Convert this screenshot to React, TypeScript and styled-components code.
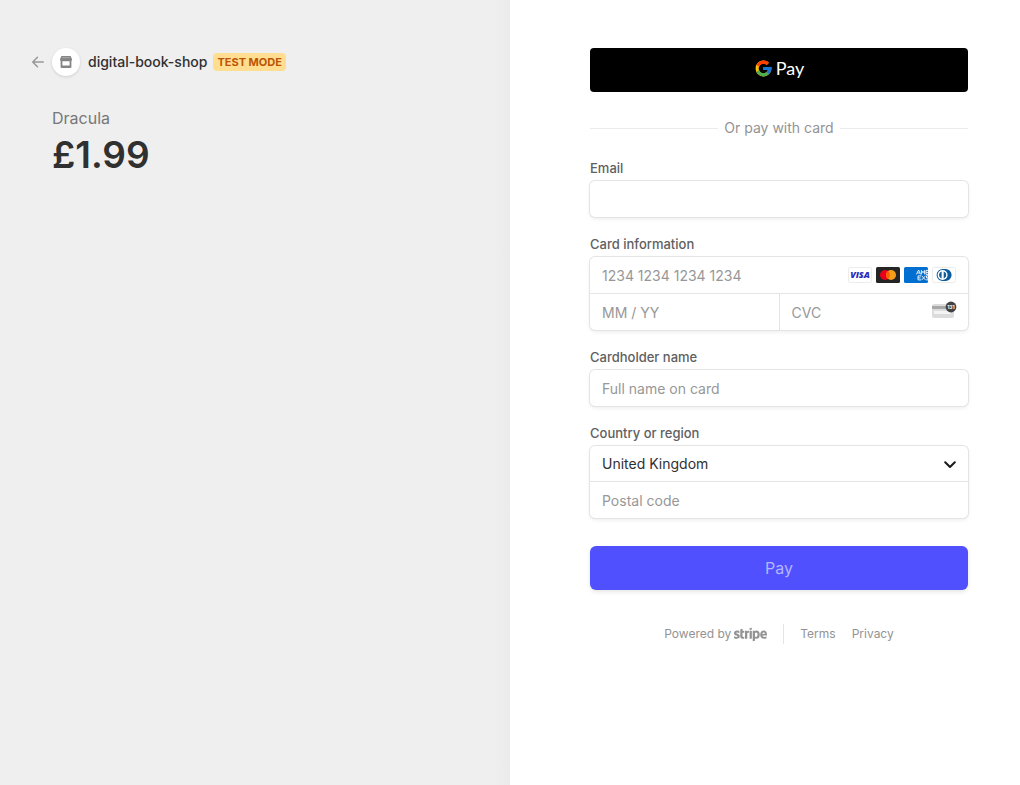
import React from 'react';
import styled, { createGlobalStyle, css } from 'styled-components';
import { FcGoogle } from 'react-icons/fc';
import { FaStripe } from 'react-icons/fa';

const GlobalStyle = createGlobalStyle`
  *, *::before, *::after { box-sizing: border-box; }
  body {
    margin: 0;
    background: #fff;
    color: #303030;
    font-family: Inter, "Liberation Sans", sans-serif;
    font-size: 14px;
    line-height: 20px;
    -webkit-font-smoothing: antialiased;
  }
  button, input, select { font: inherit; color: inherit; }
`;

const Page = styled.div`
  display: grid;
  grid-template-columns: 1fr 1fr;
  min-height: 100vh;
`;

const Summary = styled.section`
  padding: 48px 32px;
  background: linear-gradient(to left, #ebebeb, #efefef 16px);
`;

const Business = styled.header`
  display: flex;
  align-items: center;
`;

const BackLink = styled.a`
  display: flex;
  width: 20px;
  color: #999;
`;

const Avatar = styled.span`
  display: grid;
  place-items: center;
  width: 28px;
  height: 28px;
  border-radius: 50%;
  background: #fff;
  color: #858585;
  box-shadow: 0 1px 3px rgba(0, 0, 0, 0.14);
`;

const BusinessName = styled.span`
  margin: 0 6px 0 8px;
  font-weight: 500;
`;

const Badge = styled.span`
  padding: 0 4px;
  border-radius: 4px;
  background: #ffde92;
  color: #bb5504;
  font-size: 11px;
  font-weight: 700;
  line-height: 18px;
`;

const Product = styled.div`
  padding: 32px 20px;
`;

const ProductName = styled.h1`
  margin: 0;
  color: #777;
  font-size: 16px;
  font-weight: 400;
  line-height: 20px;
`;

const Price = styled.p`
  margin: 4px 0 0;
  font-size: 37px;
  font-weight: 600;
  line-height: 46px;
`;

const Payment = styled.main`
  padding: 48px 52px 48px 80px;
`;

const WideButton = styled.button`
  display: flex;
  align-items: center;
  justify-content: center;
  width: 100%;
  height: 44px;
  padding: 0;
  border: 0;
`;

const GooglePayButton = styled(WideButton)`
  gap: 3px;
  padding-bottom: 4px;
  border-radius: 4px;
  background: #000;
  color: #fff;
  font-family: Lato, "Liberation Sans", sans-serif;
  font-size: 18px;
`;

const PayButton = styled(WideButton)`
  margin-top: 28px;
  border-radius: 6px;
  background: #5050ff;
  color: #b5b5ff;
  font-size: 16px;
  font-weight: 400;
  box-shadow: 0 2px 4px rgba(0, 0, 0, 0.1);
`;

const Divider = styled.div`
  display: flex;
  align-items: center;
  gap: 6px;
  margin: 26px 0 20px;
  color: #939393;

  &::before, &::after {
    content: "";
    flex: 1;
    height: 1px;
    background: #ebebeb;
  }
`;

const Form = styled.form`
  display: flex;
  flex-direction: column;
`;

const Fields = styled.div`
  display: flex;
  flex-direction: column;
  gap: 17px;
`;

const Field = styled.div`
  display: flex;
  flex-direction: column;
  gap: 3px;
`;

const Label = styled.label`
  color: #606060;
  font-size: 13px;
  font-weight: 500;
`;

const Group = styled.div`
  border-radius: 5px;
  background: #fff;
  box-shadow: 0 0 0 1px #e4e4e4, 0 2px 4px rgba(0, 0, 0, 0.08);
`;

const Row = styled.div<{ $divided?: boolean }>`
  display: flex;
  align-items: center;
  ${({ $divided }) => $divided && css`border-top: 1px solid #e4e4e4;`}
`;

const Cell = styled.div<{ $divided?: boolean }>`
  display: flex;
  flex: 1;
  align-items: center;
  min-width: 0;
  ${({ $divided }) => $divided && css`border-left: 1px solid #e4e4e4;`}
`;

const Input = styled.input`
  flex: 1;
  min-width: 0;
  width: 100%;
  height: 36px;
  padding: 0 12px;
  border: 0;
  outline: 0;
  background: transparent;
  &::placeholder { color: #979797; opacity: 1; }
`;

const SelectCell = styled.div`
  display: grid;
  flex: 1;
  align-items: center;
  > * { grid-area: 1 / 1; }
  > svg { justify-self: end; margin-right: 12px; pointer-events: none; }
`;

const Select = styled.select`
  appearance: none;
  width: 100%;
  height: 35px;
  padding: 0 36px 0 12px;
  border: 0;
  outline: 0;
  background: transparent;
`;

const Brands = styled.div`
  display: flex;
  gap: 4px;
  padding-right: 12px;
`;

const CvcHint = styled.span`
  display: flex;
  padding: 0 10px 5px 0;
`;

const Footer = styled.footer`
  display: flex;
  align-items: center;
  justify-content: center;
  gap: 16px;
  margin-top: 34px;
  color: #939393;
  font-size: 12px;
`;

const FooterLink = styled.a`
  display: flex;
  align-items: center;
  color: inherit;
  text-decoration: none;
`;

const PoweredBy = styled(FooterLink)`
  gap: 3px;
  height: 20px;
  padding-right: 16px;
  border-right: 1px solid #e4e4e4;
`;

const ArrowIcon = () => (
  <svg width="12" height="12" viewBox="0 0 16 16" fill="currentColor" aria-hidden="true">
    <path d="M3.417 7H15a1 1 0 0 1 0 2H3.417l4.591 4.591a1 1 0 0 1-1.415 1.416l-6.3-6.3a1 1 0 0 1 0-1.414l6.3-6.3A1 1 0 0 1 8.008 2.41z" />
  </svg>
);

const StoreIcon = () => (
  <svg width="12" height="12" viewBox="0 0 12 12" fill="currentColor" aria-hidden="true">
    <path d="M1.4 0h9.2L12 3.2A1.6 1.6 0 0 1 11.4 4.8V11a1 1 0 0 1-1 1H1.6a1 1 0 0 1-1-1V4.8A1.6 1.6 0 0 1 0 3.2zM2.4 5.2V9.4h7.2V5.2z" fillRule="evenodd" />
    <path d="M2.2 1.6h7.6" stroke="#b4b4b4" strokeWidth=".8" />
  </svg>
);

const ChevronIcon = () => (
  <svg width="12" height="12" viewBox="0 0 12 12" fill="none" stroke="#1a1a1a" strokeWidth="2" strokeLinecap="round" strokeLinejoin="round" aria-hidden="true">
    <path d="M1.2 4.2 6 9l4.8-4.8" />
  </svg>
);

const VisaIcon = () => (
  <svg width="24" height="16" viewBox="0 0 24 16" role="img" aria-label="Visa">
    <rect x=".5" y=".5" width="23" height="15" rx="1.5" fill="#fff" stroke="#ececec" />
    <text x="12" y="11.4" textAnchor="middle" fontFamily="Open Sans, sans-serif" fontSize="9" fontWeight="800" fontStyle="italic" fill="#2a2ab8">VISA</text>
  </svg>
);

const MastercardIcon = () => (
  <svg width="24" height="16" viewBox="0 0 24 16" role="img" aria-label="Mastercard">
    <rect width="24" height="16" rx="1.5" fill="#252525" />
    <circle cx="9" cy="8" r="5" fill="#eb001b" />
    <circle cx="15" cy="8" r="5" fill="#f79e1b" />
    <path d="M12 4a5 5 0 0 1 0 8 5 5 0 0 1 0-8z" fill="#ff5f00" />
  </svg>
);

const AmexIcon = () => (
  <svg width="24" height="16" viewBox="0 0 24 16" role="img" aria-label="American Express">
    <rect width="24" height="16" rx="1.5" fill="#016fd0" />
    <g fill="none" stroke="#fff" strokeWidth="1" opacity=".9">
      <path d="M12.4 7.4 14.6 3l2 4.4M13.4 6h2.4M17.4 7.4V3.4l1.6 2.4 1.6-2.4v4M24 3.4h-2v4h2M22 5.4h2" />
      <path d="M17 8.9h-3v4h3M14 10.9h2.6M17.6 8.7l4 4.4M21.6 8.7l-4 4.4M24 8.9h-1.5v2H24v2h-1.8" />
    </g>
  </svg>
);

const DinersIcon = () => (
  <svg width="24" height="16" viewBox="0 0 24 16" role="img" aria-label="Diners Club">
    <rect x=".5" y=".5" width="23" height="15" rx="1.5" fill="#fff" stroke="#ececec" />
    <path d="M10.6 2h3a6 6 0 0 1 0 12h-3a6 6 0 0 1 0-12z" fill="#0a5a9c" />
    <circle cx="10.6" cy="8" r="5" fill="#fff" />
    <path d="M9.6 4.4a3.8 3.8 0 0 0 0 7.2zM11.7 4.4a3.8 3.8 0 0 1 0 7.2z" fill="#0a5a9c" />
  </svg>
);

const CvcIcon = () => (
  <svg width="26" height="18" viewBox="0 0 26 18" aria-hidden="true">
    <rect x="0" y="3" width="22" height="14" rx="2" fill="#dcdcdc" />
    <rect x="0" y="5" width="22" height="3" fill="#a8a8a8" />
    <rect x="2" y="10" width="17" height="3" fill="#f4f4f4" />
    <circle cx="19" cy="6" r="5.4" fill="#424242" />
    <text x="19" y="8" textAnchor="middle" fontFamily="Inter, sans-serif" fontSize="5" fontWeight="700" fill="#fff">131</text>
  </svg>
);

export default function App() {
  return (
    <>
      <GlobalStyle />
      <Page>
        <Summary>
          <Business>
            <BackLink href="#" aria-label="Back"><ArrowIcon /></BackLink>
            <Avatar><StoreIcon /></Avatar>
            <BusinessName>digital-book-shop</BusinessName>
            <Badge>TEST MODE</Badge>
          </Business>
          <Product>
            <ProductName>Dracula</ProductName>
            <Price>£1.99</Price>
          </Product>
        </Summary>
        <Payment>
          <GooglePayButton type="button"><FcGoogle size={19} aria-label="Google" />Pay</GooglePayButton>
          <Divider>Or pay with card</Divider>
          <Form onSubmit={(event) => event.preventDefault()}>
            <Fields>
              <Field>
                <Label htmlFor="email">Email</Label>
                <Group><Row><Input id="email" type="email" /></Row></Group>
              </Field>
              <Field>
                <Label htmlFor="card-number">Card information</Label>
                <Group>
                  <Row>
                    <Input id="card-number" placeholder="1234 1234 1234 1234" />
                    <Brands><VisaIcon /><MastercardIcon /><AmexIcon /><DinersIcon /></Brands>
                  </Row>
                  <Row $divided>
                    <Cell><Input aria-label="Expiry date" placeholder="MM / YY" /></Cell>
                    <Cell $divided>
                      <Input aria-label="Security code" placeholder="CVC" />
                      <CvcHint><CvcIcon /></CvcHint>
                    </Cell>
                  </Row>
                </Group>
              </Field>
              <Field>
                <Label htmlFor="name">Cardholder name</Label>
                <Group><Row><Input id="name" placeholder="Full name on card" /></Row></Group>
              </Field>
              <Field>
                <Label htmlFor="country">Country or region</Label>
                <Group>
                  <Row>
                    <SelectCell>
                      <Select id="country" defaultValue="GB"><option value="GB">United Kingdom</option></Select>
                      <ChevronIcon />
                    </SelectCell>
                  </Row>
                  <Row $divided><Input aria-label="Postal code" placeholder="Postal code" /></Row>
                </Group>
              </Field>
            </Fields>
            <PayButton type="submit">Pay</PayButton>
          </Form>
          <Footer>
            <PoweredBy href="#">Powered by <FaStripe size={33} aria-label="Stripe" /></PoweredBy>
            <FooterLink href="#">Terms</FooterLink>
            <FooterLink href="#">Privacy</FooterLink>
          </Footer>
        </Payment>
      </Page>
    </>
  );
}
